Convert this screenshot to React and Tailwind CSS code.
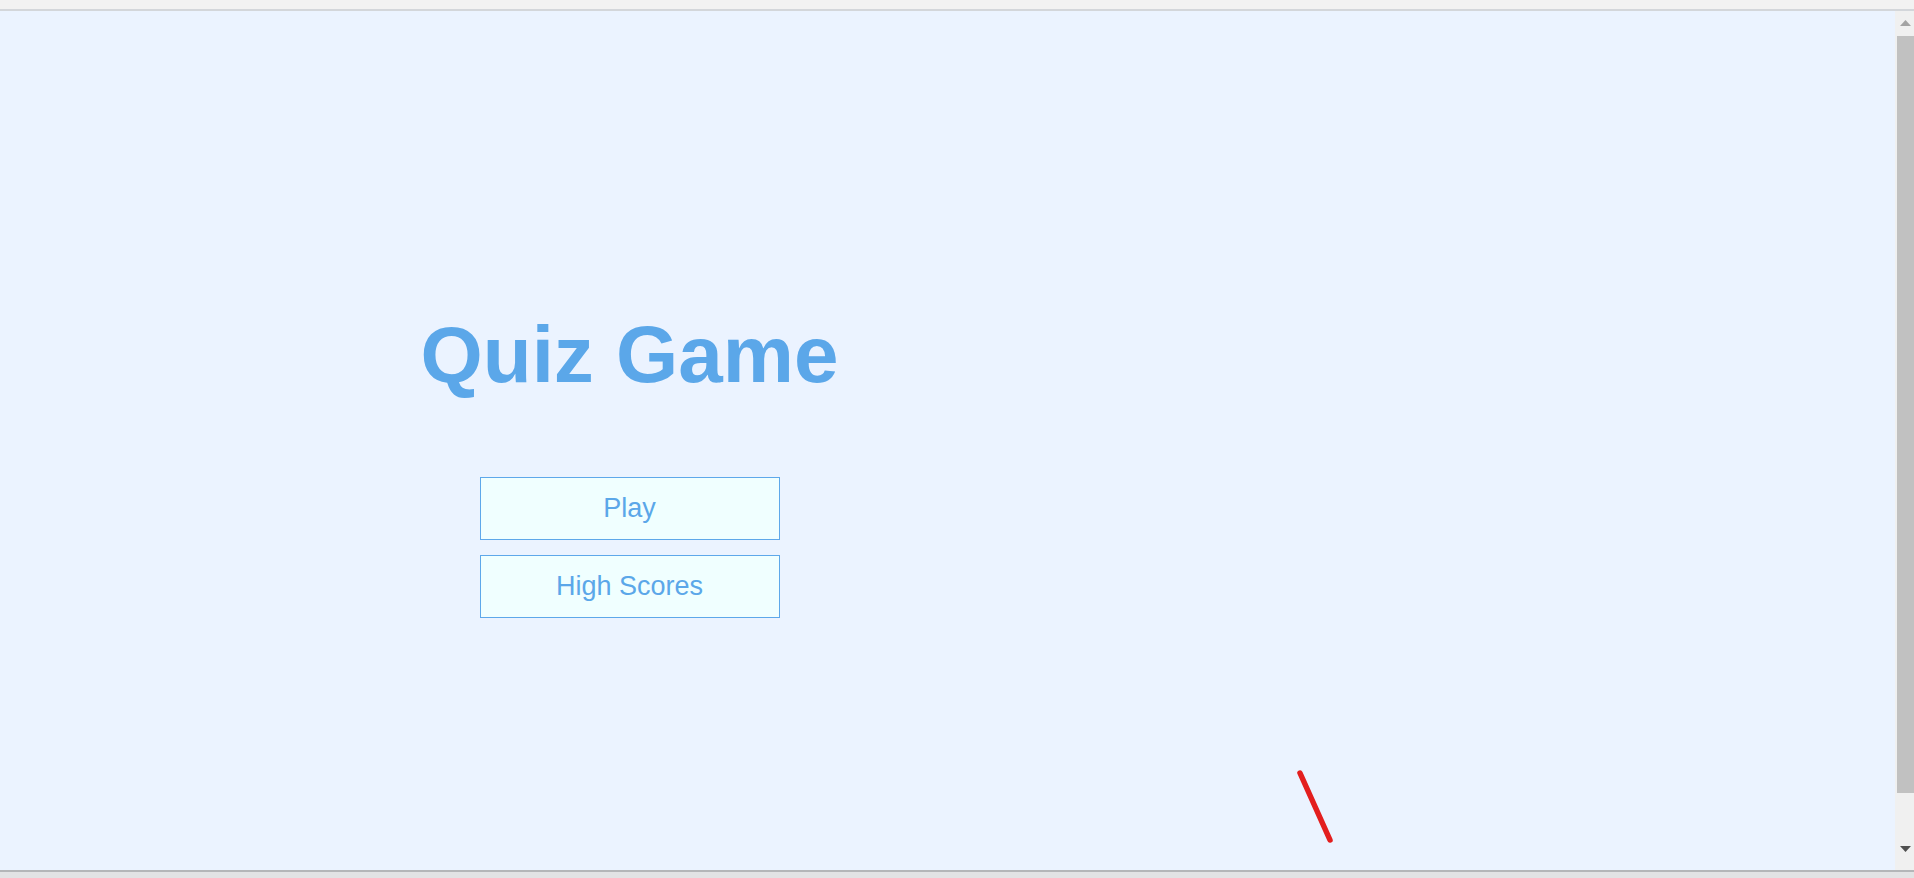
import React from 'react'

const font = { fontFamily: '"Liberation Sans", Arial, sans-serif' }

const MenuButton = ({ label }) => (
  <button
    className="w-[300px] h-[63px] flex items-center justify-center bg-[#f0ffff] border border-[#5ea8ea] text-[#5ba7e9] text-[27px] leading-none"
    style={font}
  >
    {label}
  </button>
)

const Scrollbar = () => (
  <div className="w-[19px] bg-[#f0f0f0] flex flex-col items-end">
    {/* up arrow (disabled) */}
    <div className="h-[25px] w-full flex items-start justify-center pl-[2px] pt-[9px]">
      <svg width="11" height="6" viewBox="0 0 11 6">
        <path d="M5.5 0 L11 6 L0 6 Z" fill="#a3a3a3" />
      </svg>
    </div>
    <div className="w-[17px] h-[757px] bg-[#c1c1c1]" />
    <div className="flex-1 w-full flex items-end justify-center pl-[2px] pb-[18px]">
      <svg width="11" height="6" viewBox="0 0 11 6">
        <path d="M0 0 L11 0 L5.5 6 Z" fill="#505050" />
      </svg>
    </div>
  </div>
)

export default function App() {
  return (
    <div className="w-[1914px] h-[878px] flex flex-col overflow-hidden bg-[#ebf3ff]" style={font}>
      <div className="h-[11px] bg-[#f2f2f2] border-b-2 border-[#d3d6da]" />

      <div className="flex-1 flex min-h-0">
        <div className="flex-1 relative">
          <div className="w-[1259px] flex flex-col items-center pt-[304px]">
            <h1 className="text-[80px] leading-[80px] font-bold text-[#5ba7e9]" style={font}>
              Quiz Game
            </h1>
            <div className="mt-[82px] flex flex-col gap-[15px]">
              <MenuButton label="Play" />
              <MenuButton label="High Scores" />
            </div>
          </div>

          {/* stray red stroke */}
          <svg className="absolute left-[1294px] top-[756px]" width="44" height="80" viewBox="0 0 44 80">
            <line x1="6" y1="6" x2="36" y2="73" stroke="#e31e1e" strokeWidth="5.5" strokeLinecap="round" />
          </svg>
        </div>
        <Scrollbar />
      </div>

      <div className="h-[8px] bg-[#e2e3e4] border-t-2 border-[#b4b6b8]" />
    </div>
  )
}
